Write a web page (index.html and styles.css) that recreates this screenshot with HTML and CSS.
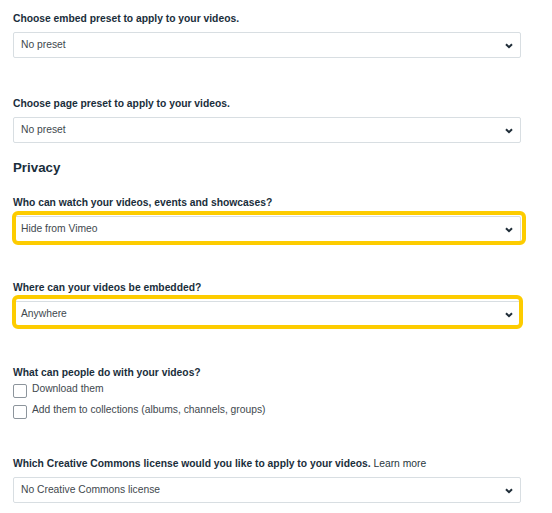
FILE: index.html
```html
<!DOCTYPE html>
<html lang="en">
<head>
<meta charset="utf-8">
<title>Video settings</title>
<link rel="stylesheet" href="styles.css">
</head>
<body>
<div class="page">
  <div class="field">
    <div class="label">Choose embed preset to apply to your videos.</div>
    <div class="select"><span>No preset</span><svg class="chev" width="8" height="6" viewBox="0 0 8 6"><path d="M1 1.2 L4 4.2 L7 1.2" fill="none" stroke="#1f2d38" stroke-width="2"/></svg></div>
  </div>
  <div class="field field-before-heading">
    <div class="label">Choose page preset to apply to your videos.</div>
    <div class="select"><span>No preset</span><svg class="chev" width="8" height="6" viewBox="0 0 8 6"><path d="M1 1.2 L4 4.2 L7 1.2" fill="none" stroke="#1f2d38" stroke-width="2"/></svg></div>
  </div>
  <h2 class="heading">Privacy</h2>
  <div class="field">
    <div class="label">Who can watch your videos, events and showcases?</div>
    <div class="hl hl-a">
      <div class="select"><span>Hide from Vimeo</span><svg class="chev" width="8" height="6" viewBox="0 0 8 6"><path d="M1 1.2 L4 4.2 L7 1.2" fill="none" stroke="#1f2d38" stroke-width="2"/></svg></div>
    </div>
  </div>
  <div class="field">
    <div class="label">Where can your videos be embedded?</div>
    <div class="hl hl-b">
      <div class="select"><span>Anywhere</span><svg class="chev" width="8" height="6" viewBox="0 0 8 6"><path d="M1 1.2 L4 4.2 L7 1.2" fill="none" stroke="#1f2d38" stroke-width="2"/></svg></div>
    </div>
  </div>
  <div class="field field-checks">
    <div class="label label-tight">What can people do with your videos?</div>
    <label class="check"><span class="box"></span><span>Download them</span></label>
    <label class="check"><span class="box"></span><span>Add them to collections (albums, channels, groups)</span></label>
  </div>
  <div class="field field-last">
    <div class="label">Which Creative Commons license would you like to apply to your videos. <span class="link">Learn more</span></div>
    <div class="select"><span>No Creative Commons license</span><svg class="chev" width="8" height="6" viewBox="0 0 8 6"><path d="M1 1.2 L4 4.2 L7 1.2" fill="none" stroke="#1f2d38" stroke-width="2"/></svg></div>
  </div>
</div>
</body>
</html>
```
FILE: styles.css
```css
html, body {
  margin: 0;
  padding: 0;
  background: #ffffff;
}
body {
  font-family: "Liberation Sans", Arial, sans-serif;
  font-size: 10.3px;
  color: #1a2e3b;
}
.page {
  padding: 12px 0 0 13px;
  width: 508px;
}
.field {
  margin-bottom: 39px;
}
.field-before-heading {
  margin-bottom: 16px;
}
.field-checks {
  margin-bottom: 35px;
}
.field-last {
  margin-bottom: 0;
}
.label {
  font-weight: bold;
  line-height: 14px;
  margin-bottom: 6px;
  white-space: nowrap;
}
.label-tight {
  margin-bottom: 0;
}
.link {
  font-weight: normal;
  color: #2a3740;
}
.heading {
  margin: 0 0 19px 0;
  font-size: 13.3px;
  line-height: 18px;
  font-weight: bold;
  color: #1a2e3b;
}
.select {
  box-sizing: border-box;
  height: 26px;
  border: 1px solid #d8dee2;
  border-radius: 2px;
  background: #ffffff;
  display: flex;
  align-items: center;
  justify-content: space-between;
  padding: 0 7px 0 7px;
  color: #41484e;
  line-height: 14px;
}
.chev {
  display: block;
  margin-top: 1px;
}
.hl {
  position: relative;
}
.hl::after {
  content: "";
  position: absolute;
  border: 4px solid #fdcc00;
  border-radius: 6px;
  pointer-events: none;
}
.hl-a::after {
  top: -5px;
  left: -1px;
  right: -5px;
  bottom: -3px;
}
.hl-b::after {
  top: -6px;
  left: -1px;
  right: -2px;
  bottom: -2px;
}
.check {
  display: flex;
  align-items: center;
  height: 21px;
  gap: 5px;
  color: #41484e;
  line-height: 14px;
}
.check > span:last-child {
  margin-top: -3px;
}
.box {
  box-sizing: border-box;
  width: 14px;
  height: 14px;
  border: 1px solid #8d959c;
  border-radius: 2px;
  background: #ffffff;
  flex: none;
}
```
